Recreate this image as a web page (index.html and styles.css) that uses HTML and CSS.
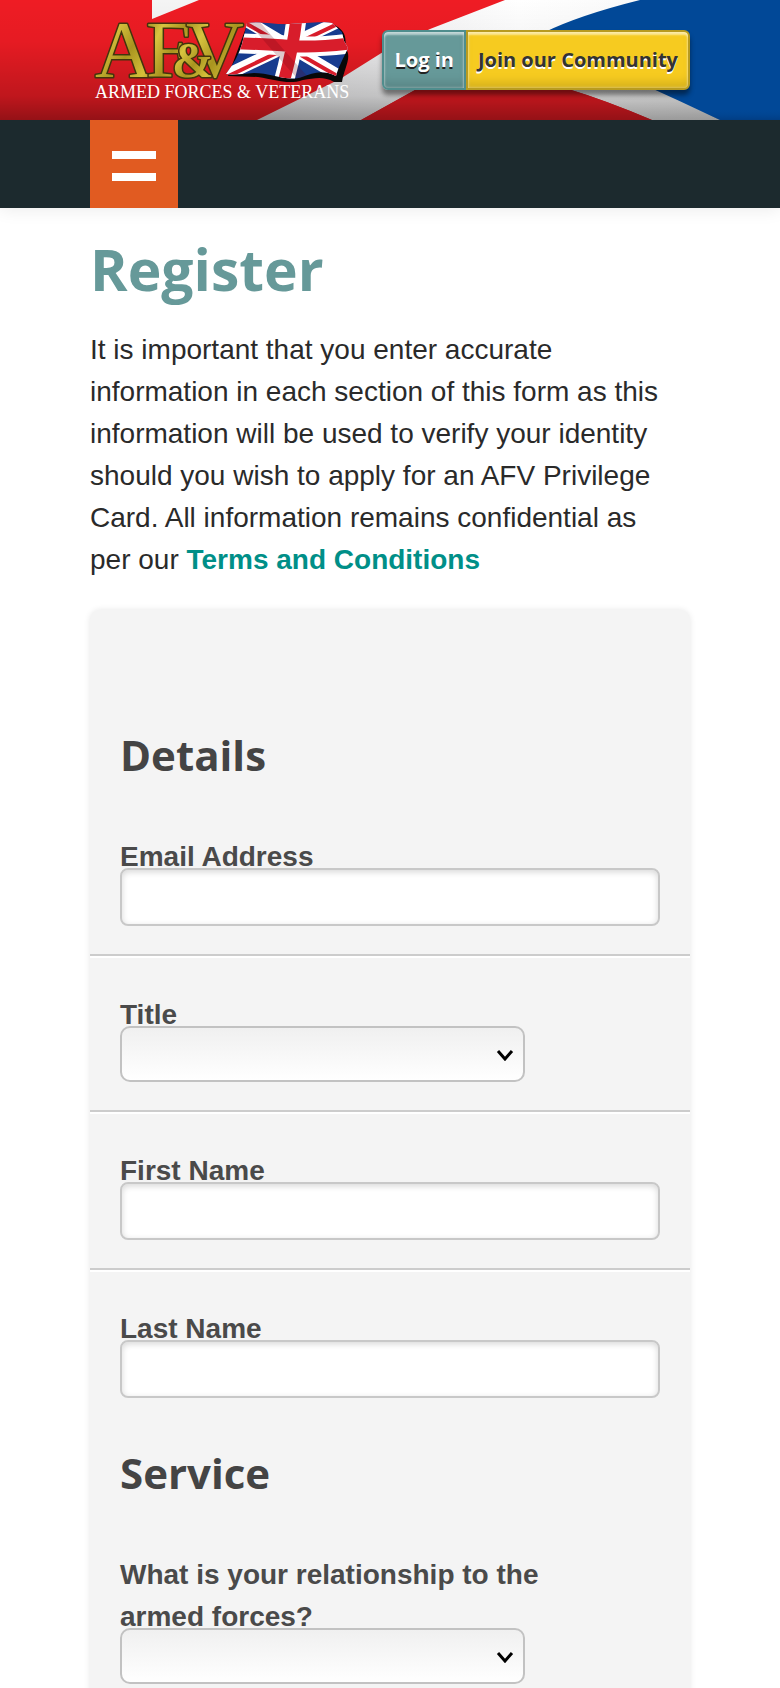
FILE: index.html
```html
<!DOCTYPE html>
<html lang="en">
<head>
<meta charset="utf-8">
<meta name="viewport" content="width=device-width, initial-scale=1">
<title>Register - Armed Forces &amp; Veterans</title>
<link rel="stylesheet" href="styles.css">
</head>
<body>
<header class="banner">
  <svg class="banner-art" viewBox="0 0 780 120" preserveAspectRatio="none" aria-hidden="true">
    <defs>
      <linearGradient id="shade" x1="0" y1="0" x2="0" y2="1">
        <stop offset="0" stop-color="#000" stop-opacity="0"/>
        <stop offset=".35" stop-color="#000" stop-opacity=".04"/>
        <stop offset=".8" stop-color="#000" stop-opacity=".2"/>
        <stop offset="1" stop-color="#000" stop-opacity=".38"/>
      </linearGradient>
      <linearGradient id="shadeBlue" x1="0" y1="0" x2="0" y2="1">
        <stop offset=".7" stop-color="#014897" stop-opacity="0"/>
        <stop offset="1" stop-color="#012d66" stop-opacity=".4"/>
      </linearGradient>
      <linearGradient id="cloth" x1="0" y1="0" x2="1" y2="0">
        <stop offset="0" stop-color="#e8e8ea"/>
        <stop offset=".5" stop-color="#fff"/>
        <stop offset="1" stop-color="#f4f4f4"/>
      </linearGradient>
    </defs>
    <rect width="780" height="120" fill="#ef1c24"/>
    <path d="M152 0H199L152 19Z" fill="#f4f4f4"/>
    <path d="M505 0H780V120H652Q605 100 565 88L415 90 361 120H257L340 79 383 52 430 29Z" fill="url(#cloth)"/>
    <path d="M415 90 440 75H530L565 88Q605 100 652 120H361Z" fill="#ef1c24"/>
    <path class="banner-shade" d="M0 0H780V120H0Z" fill="url(#shade)"/>
    <path d="M640 0H780V120H720Q680 101 640 83L545 32Q580 15 640 0Z" fill="#014897"/>
    <path d="M640 83H780V120H720Q680 101 640 83Z" fill="url(#shadeBlue)"/>
  </svg>
  <div class="wrap banner-row">
    <a class="logo" href="#" aria-label="Armed Forces and Veterans home">
      <svg class="logo-art" viewBox="0 0 264 90" aria-hidden="true">
        <defs>
          <linearGradient id="gold" x1="0" y1="0" x2="1" y2="1">
            <stop offset="0" stop-color="#897516"/>
            <stop offset=".3" stop-color="#d8c43f"/>
            <stop offset=".55" stop-color="#a8941f"/>
            <stop offset=".8" stop-color="#d5c03a"/>
            <stop offset="1" stop-color="#8d7915"/>
          </linearGradient>
          <clipPath id="flagShape"><path d="M77 11C92 9 106 13 120 12S154 9 162 11L172 20 174 29 178 36C173 47 168 56 166 64 152 57 143 61 132 65 118 70 101 61 84 61 73 62 62 63 56 62Q68 46 72 32Z"/></clipPath>
        </defs>
        <g transform="translate(80 0)">
          <path d="M77 13 162 12C174 17 177 24 175 36 183 44 174 56 172 70L164 70C154 64 145 66 133 68 118 73 107 68 88 65L58 64Z" fill="#080808"/>
          <g clip-path="url(#flagShape)">
            <path d="M50 0H190V75H50Z" fill="#173c8f"/>
            <path d="M70 5 176 68M176 6 50 66" stroke="#fff" stroke-width="12"/>
            <path d="M70 8 176 69M176 8 50 68" stroke="#d81d2b" stroke-width="4"/>
            <path d="M127 0C125 25 120 48 112 76M60 31Q95 32 120 34T184 31" fill="none" stroke="#fff" stroke-width="20"/>
            <path d="M127 0C125 25 120 48 112 76M60 31Q95 32 120 34T184 31" fill="none" stroke="#d81d2b" stroke-width="12"/>
            <path d="M76 0Q100 30 142 76" fill="none" stroke="#650511" stroke-opacity=".22" stroke-width="9"/>
          </g>
        </g>
        <g class="logo-letters" fill="url(#gold)">
          <text x="5" y="65">A</text>
          <text x="56" y="65">F</text>
          <text x="96" y="65">V</text>
          <text class="logo-amp" x="82" y="65">&amp;</text>
        </g>
        <text class="logo-words" x="5" y="86">ARMED FORCES &amp; VETERANS</text>
      </svg>
    </a>
    <div class="account">
      <a class="button login" href="#">Log in</a>
      <a class="button join" href="#">Join our Community</a>
    </div>
  </div>
</header>
<nav class="bar" aria-label="Main">
  <div class="wrap">
    <button class="menu" type="button" aria-label="Open menu"><span class="menu-line"></span><span class="menu-line"></span></button>
  </div>
</nav>
<main class="wrap">
  <h1 class="title">Register</h1>
  <p class="intro">It is important that you enter accurate information in each section of this form as this information will be used to verify your identity should you wish to apply for an AFV Privilege Card. All information remains confidential as per our <a class="terms" href="#">Terms and Conditions</a></p>
  <form class="card">
    <section class="group">
      <h2 class="heading">Details</h2>
      <div class="field"><label class="label" for="email">Email Address</label><input class="control" id="email" type="email"></div>
      <div class="field"><label class="label" for="title">Title</label><div class="picker"><select class="control select" id="title"><option></option></select><svg class="chevron" viewBox="0 0 16 12" aria-hidden="true"><path d="M1 2 8 10 15 2"/></svg></div></div>
      <div class="field"><label class="label" for="first">First Name</label><input class="control" id="first" type="text"></div>
      <div class="field"><label class="label" for="last">Last Name</label><input class="control" id="last" type="text"></div>
    </section>
    <section class="group">
      <h2 class="heading">Service</h2>
      <div class="field"><label class="label" for="relation">What is your relationship to the armed forces?</label><div class="picker"><select class="control select" id="relation"><option></option></select><svg class="chevron" viewBox="0 0 16 12" aria-hidden="true"><path d="M1 2 8 10 15 2"/></svg></div></div>
    </section>
  </form>
</main>
</body>
</html>
```
FILE: styles.css
```css
* { box-sizing: border-box; }

html { overflow-x: hidden; scrollbar-width: none; }

body {
  margin: 0;
  background: #fff;
  color: #2a2a2a;
  font: 28px/42px "Liberation Sans", Arial, sans-serif;
}

.wrap {
  width: 100%;
  max-width: 600px;
  margin: 0 auto;
}

/* Banner */
.banner {
  position: relative;
  overflow: hidden;
}

.banner-art {
  position: absolute;
  inset: 0;
  width: 100%;
  height: 100%;
}

.banner-row {
  position: relative;
  display: flex;
  justify-content: space-between;
  align-items: flex-end;
  padding: 12px 0 18px;
}

.logo { display: block; }

.logo-art {
  display: block;
  width: 264px;
  height: 90px;
}

.logo-letters {
  font-family: "Liberation Serif", serif;
  font-size: 80px;
  stroke: #43350c;
  stroke-width: 3px;
  stroke-linejoin: round;
  paint-order: stroke;
}

.logo-amp { font-size: 50px; font-weight: bold; }

.logo-words {
  font-family: "Liberation Serif", serif;
  font-size: 18px;
  fill: #fff;
  stroke: #fff;
  stroke-width: 0;
}

.account {
  display: flex;
  margin-bottom: 12px;
  border-radius: 6px;
  box-shadow: 0 5px 5px rgba(0, 0, 0, .45);
}

.button {
  padding: 0 10px;
  border: 2px solid;
  font: bold 20px/56px "Open Sans", sans-serif;
  text-decoration: none;
  white-space: nowrap;
}

.login {
  border-color: #4f8d8d;
  border-radius: 6px 0 0 6px;
  background: #669999;
  box-shadow: inset 0 3px 2px rgba(255, 255, 255, .5), inset 0 -10px 10px -4px rgba(0, 0, 0, .13), inset 0 0 3px rgba(255, 255, 255, .6);
  color: #fff;
  text-shadow: 0 2px 0 #222;
}

.join {
  border-color: #b89b20;
  border-radius: 0 6px 6px 0;
  background: #f6cb20;
  box-shadow: inset 0 3px 2px rgba(255, 255, 255, .5), inset 0 -10px 10px -4px rgba(0, 0, 0, .13), inset 0 0 3px rgba(255, 255, 255, .6);
  color: #333;
  text-shadow: 0 2px 0 #fff;
}

/* Navigation */
.bar {
  background: #1c2a2e;
  box-shadow: 0 2px 16px rgba(0, 0, 0, .08);
}

.menu {
  display: flex;
  flex-direction: column;
  justify-content: center;
  gap: 14px;
  width: 88px;
  height: 88px;
  padding: 4px 22px 0;
  border: 0;
  background: #e15b21;
}

.menu-line {
  height: 8px;
  background: #fff;
}

/* Intro */
.title {
  margin: 21px 0 20px;
  color: #669999;
  font: bold 57px/80px "Open Sans", sans-serif;
}

.intro {
  margin: 0 0 29px;
  padding-right: 10px;
}

.terms {
  color: #008f88;
  font-weight: bold;
  text-decoration: none;
}

/* Form */
.card {
  padding: 98px 0 40px;
  border-radius: 10px;
  background: #f4f4f4;
  box-shadow: 0 0 6px rgba(0, 0, 0, .1);
}

.heading {
  margin: 0;
  padding: 17px 30px 15px;
  color: #444;
  font: bold 42px/60px "Open Sans", sans-serif;
}

.field {
  padding: 36px 30px 28px;
  border-bottom: 2px solid #ccc;
  box-shadow: 0 2px 0 #fff;
}

.field + .field { margin-top: 2px; }

.field:last-child {
  border-bottom: 0;
  box-shadow: none;
}

.label {
  display: block;
  max-width: 90%;
  margin-bottom: -10px;
  color: #4a4a4a;
  font-weight: bold;
}

.control {
  position: relative;
  display: block;
  width: 100%;
  height: 58px;
  padding: 0 16px;
  border: 2px solid #c8c8c8;
  border-radius: 8px;
  background: #fff;
  box-shadow: inset 0 2px 6px rgba(0, 0, 0, .16);
  font: inherit;
}

.picker {
  position: relative;
  width: 75%;
}

.select {
  height: 56px;
  appearance: none;
  border-color: #c2c2c2;
  border-radius: 10px;
  background: linear-gradient(#f0f0f0, #fff);
  box-shadow: none;
}

.chevron {
  position: absolute;
  top: 23px;
  right: 11px;
  width: 18px;
  height: 12px;
  fill: none;
  stroke: #000;
  stroke-width: 3px;
  pointer-events: none;
}
```
